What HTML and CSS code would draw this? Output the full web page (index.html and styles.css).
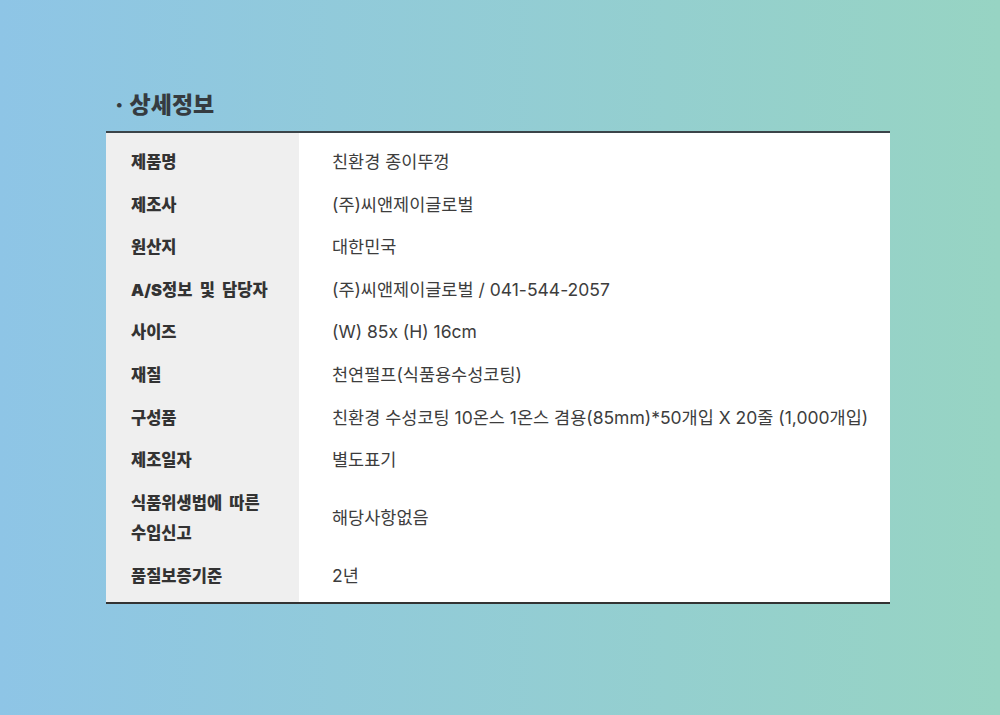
FILE: index.html
```html
<!DOCTYPE html>
<html lang="ko">
<head>
  <meta charset="UTF-8" />
  <meta name="viewport" content="width=device-width, initial-scale=1.0"/>
  <title>상세정보</title>
  <link rel="stylesheet" href="styles.css">
</head>
<body>
  <section class="detail">
    <h2 class="detail-title"><span class="dot">·</span>상세정보</h2>
    <table class="info">
      <tr class="first"><th>제품명</th><td>친환경 종이뚜껑</td></tr>
      <tr><th>제조사</th><td>(주)씨앤제이글로벌</td></tr>
      <tr><th>원산지</th><td>대한민국</td></tr>
      <tr><th>A/S정보 및 담당자</th><td>(주)씨앤제이글로벌 / 041-544-2057</td></tr>
      <tr><th>사이즈</th><td>(W) 85x (H) 16cm</td></tr>
      <tr><th>재질</th><td>천연펄프(식품용수성코팅)</td></tr>
      <tr><th>구성품</th><td>친환경 수성코팅 10온스 1온스 겸용(85mm)*50개입 X 20줄 (1,000개입)</td></tr>
      <tr><th>제조일자</th><td>별도표기</td></tr>
      <tr><th>식품위생법에 따른<br>수입신고</th><td>해당사항없음</td></tr>
      <tr class="last"><th>품질보증기준</th><td>2년</td></tr>
    </table>
  </section>
</body>
</html>
```

FILE: styles.css
```css
body {
  margin: 0;
  height: 715px;
  font-family: Inter, "Noto Sans CJK KR", sans-serif;
  background: linear-gradient(to right, #8ec5e6, #97d4c3);
  color: #333;
}
.detail {
  width: 784px;
  padding-top: 88px;
  margin-left: 106px;
}
.detail-title {
  margin: 0 0 9px 0;
  font-size: 23px;
  font-weight: 900;
  color: #353b40;
  line-height: 34px;
  padding-left: 9px;
}
.dot {
  margin-right: 6px;
}
.info {
  width: 100%;
  border-collapse: collapse;
  background: #fff;
  border-top: 2px solid #3b4449;
  border-bottom: 2px solid #333;
}
.info th,
.info td {
  padding: 6px 0;
  line-height: 30.6px;
  text-align: left;
  vertical-align: middle;
}
.info th {
  width: 168px;
  padding-left: 25px;
  background: #efefef;
  font-size: 16.5px;
  font-weight: 900;
  word-spacing: 4px;
  color: #333;
}
.info td {
  padding-left: 33px;
  font-size: 17.5px;
  color: #3d3d3d;
}
.info .first th,
.info .first td {
  padding-top: 14px;
}
.info .last th,
.info .last td {
  padding-bottom: 10px;
}
```
